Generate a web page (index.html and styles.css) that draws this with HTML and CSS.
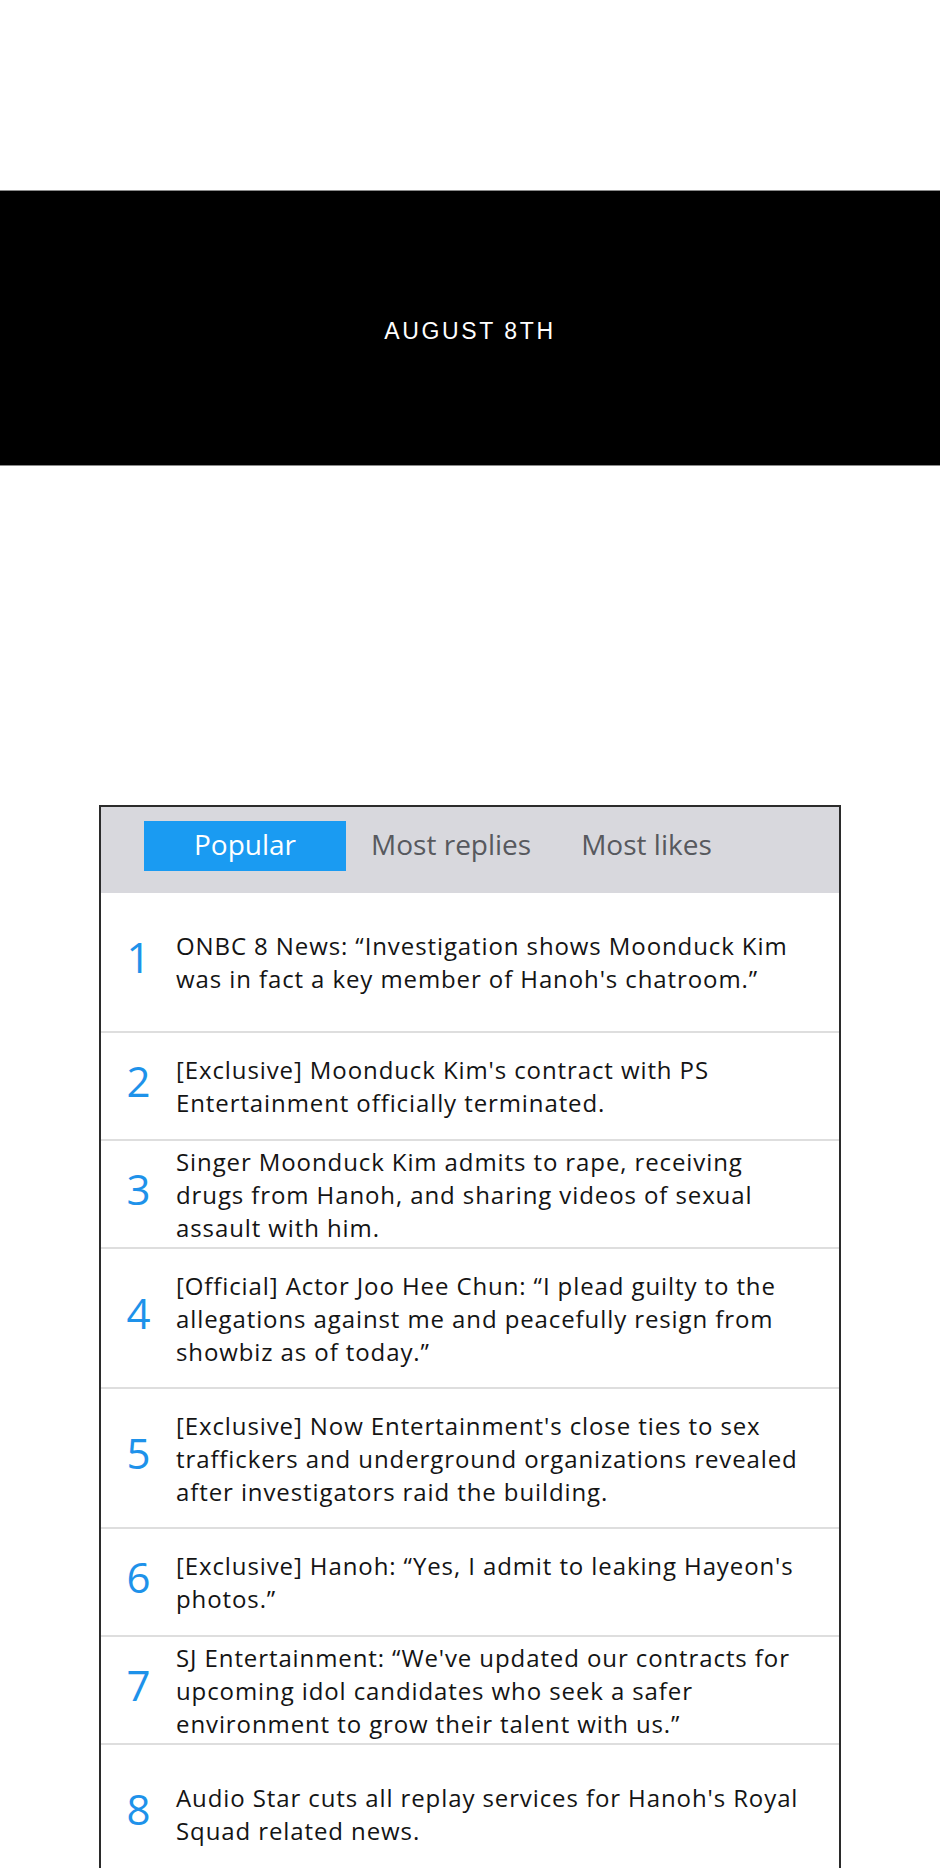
FILE: index.html
```html
<!DOCTYPE html>
<html lang="en">
<head>
  <meta charset="UTF-8" />
  <meta name="viewport" content="width=device-width, initial-scale=1.0"/>
  <title>August 8th - News Ranking</title>
  <link rel="stylesheet" href="styles.css">
</head>
<body>
  <div class="page">

    <header class="date-band">
      <span class="date-text">AUGUST 8TH</span>
    </header>

    <section class="news-card">
      <nav class="tabs">
        <span class="tab active">Popular</span>
        <span class="tab">Most replies</span>
        <span class="tab">Most likes</span>
      </nav>

      <ol class="news-list">
        <li class="news-item tall">
          <span class="rank">1</span>
          <p class="headline">ONBC 8 News: “Investigation shows Moonduck Kim<br>was in fact a key member of Hanoh's chatroom.”</p>
        </li>
        <li class="news-item">
          <span class="rank">2</span>
          <p class="headline">[Exclusive] Moonduck Kim's contract with PS<br>Entertainment officially terminated.</p>
        </li>
        <li class="news-item">
          <span class="rank">3</span>
          <p class="headline">Singer Moonduck Kim admits to rape, receiving<br>drugs from Hanoh, and sharing videos of sexual<br>assault with him.</p>
        </li>
        <li class="news-item tall">
          <span class="rank">4</span>
          <p class="headline">[Official] Actor Joo Hee Chun: “I plead guilty to the<br>allegations against me and peacefully resign from<br>showbiz as of today.”</p>
        </li>
        <li class="news-item tall">
          <span class="rank">5</span>
          <p class="headline">[Exclusive] Now Entertainment's close ties to sex<br>traffickers and underground organizations revealed<br>after investigators raid the building.</p>
        </li>
        <li class="news-item">
          <span class="rank">6</span>
          <p class="headline">[Exclusive] Hanoh: “Yes, I admit to leaking Hayeon's<br>photos.”</p>
        </li>
        <li class="news-item">
          <span class="rank">7</span>
          <p class="headline">SJ Entertainment: “We've updated our contracts for<br>upcoming idol candidates who seek a safer<br>environment to grow their talent with us.”</p>
        </li>
        <li class="news-item tall">
          <span class="rank">8</span>
          <p class="headline">Audio Star cuts all replay services for Hanoh's Royal<br>Squad related news.</p>
        </li>
      </ol>
    </section>

  </div>
</body>
</html>
```

FILE: styles.css
```css
body {
  margin: 0;
  padding: 0;
  background-color: #fff;
  font-family: "Open Sans", "Noto Sans", sans-serif;
}

.page {
  height: 1868px;
  padding-top: 190px;
  box-sizing: border-box;
  overflow: hidden;
}

/* black date panel */
.date-band {
  height: 276px;
  box-sizing: border-box;
  padding-top: 6px;
  background: #000;
  border-top: 1px solid #8a8a8a;
  border-bottom: 1px solid #8a8a8a;
  display: flex;
  align-items: center;
  justify-content: center;
}

.date-text {
  color: #fff;
  font-family: "Liberation Sans", Arial, sans-serif;
  font-size: 23px;
  letter-spacing: 2.6px;
}

/* news ranking card */
.news-card {
  width: 742px;
  box-sizing: border-box;
  margin: 339px auto 0;
  border: 2px solid #2b2b2b;
  border-bottom: none;
}

.tabs {
  height: 86px;
  box-sizing: border-box;
  padding: 14px 0 0 43px;
  background: #d8d8dd;
  display: flex;
  align-items: flex-start;
}

.tab {
  padding: 0 25px 4px;
  line-height: 46px;
  font-size: 28px;
  color: #57595e;
  white-space: nowrap;
}

.tab.active {
  padding: 0 50px 4px;
  background: #1a9bf2;
  color: #fff;
}

.news-list {
  list-style: none;
  margin: 0;
  padding: 0;
}

.news-item {
  min-height: 108px;
  box-sizing: border-box;
  border-bottom: 2px solid #dedede;
  display: flex;
  align-items: center;
}

.news-item.tall {
  min-height: 140px;
}

.rank {
  width: 75px;
  flex-shrink: 0;
  margin-bottom: 10px;
  text-align: center;
  font-size: 42px;
  font-weight: 500;
  line-height: 1;
  color: #1e92ea;
}

.headline {
  margin: 0;
  font-size: 24px;
  font-weight: 500;
  letter-spacing: 0.9px;
  line-height: 33px;
  color: #141414;
}
```
